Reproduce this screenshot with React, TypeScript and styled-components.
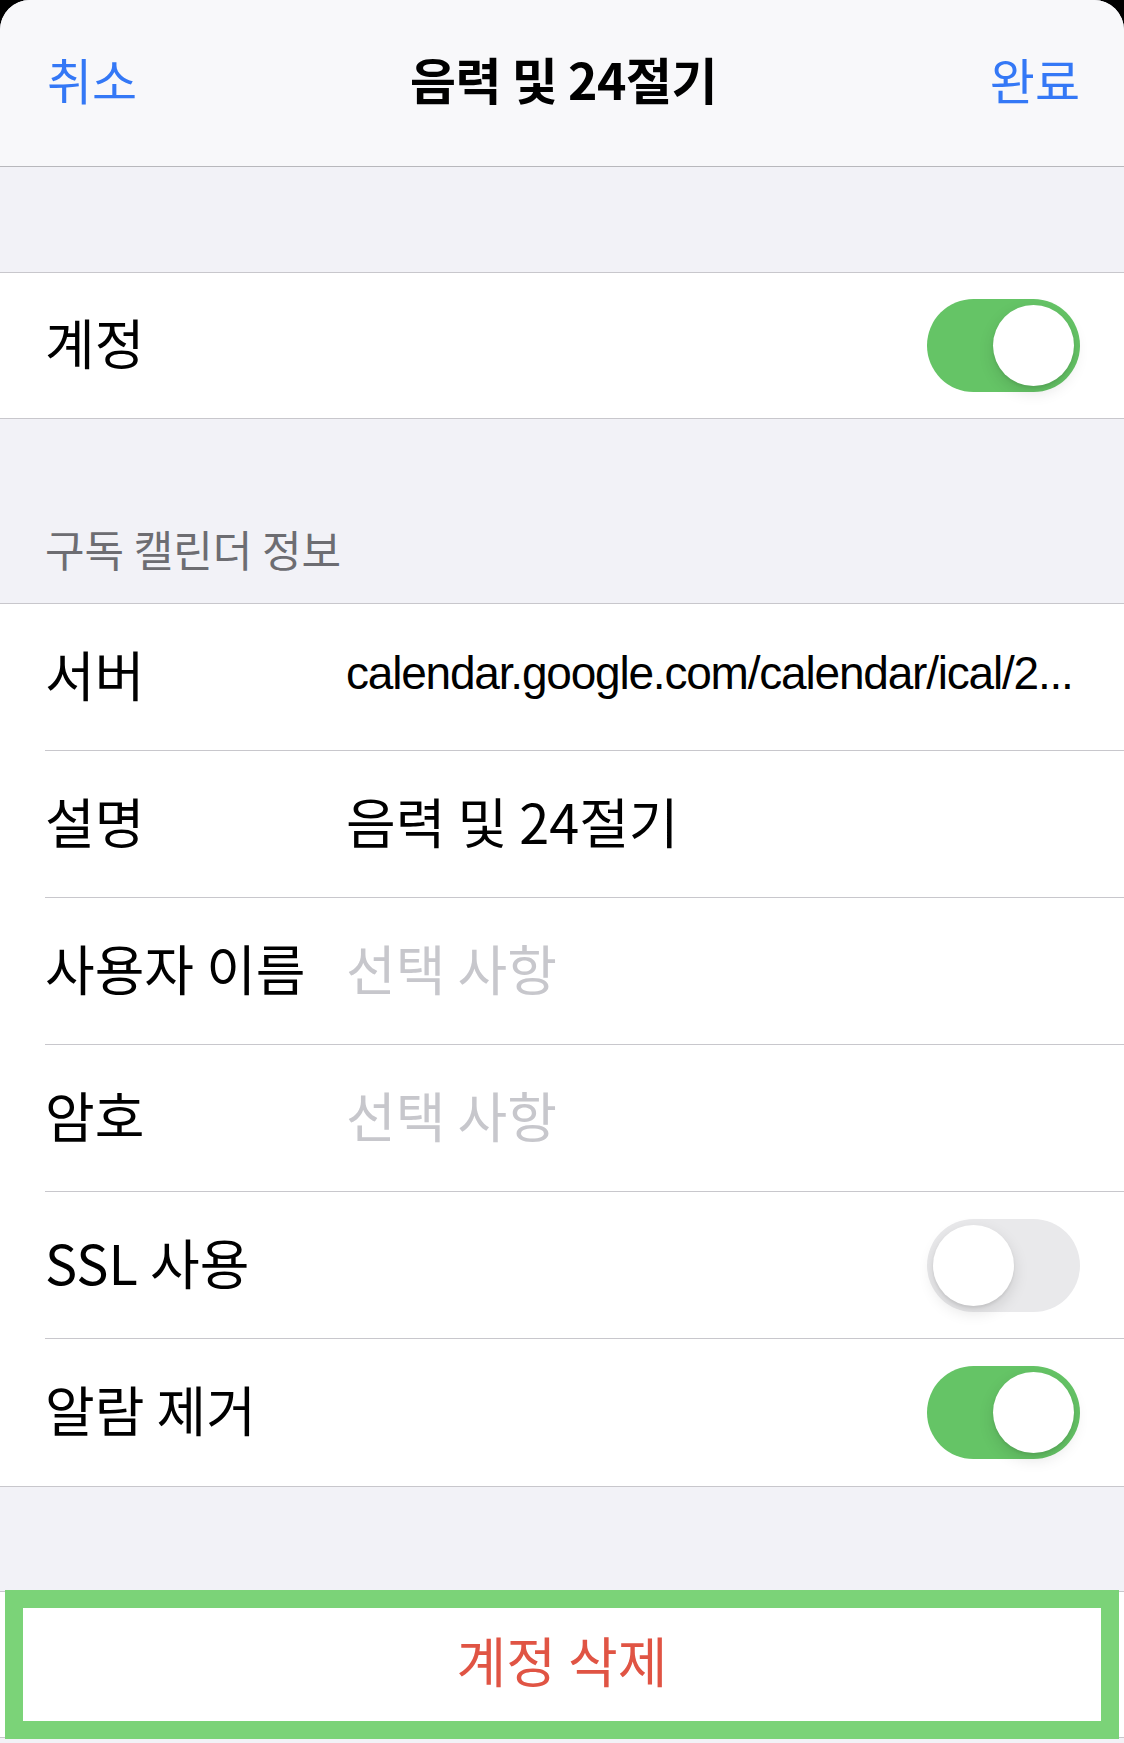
import React from 'react';
import styled, { createGlobalStyle } from 'styled-components';

const GlobalStyle = createGlobalStyle`
  html, body {
    margin: 0;
    padding: 0;
    background: #000;
  }
  * {
    box-sizing: border-box;
  }
`;

const FONT = `"Noto Sans CJK KR", "Noto Sans", sans-serif`;
const LATIN_FONT = `"Liberation Sans", "Noto Sans CJK KR", sans-serif`;

const Sheet = styled.div`
  width: 1124px;
  min-height: 1743px;
  background: #f2f2f7;
  border-radius: 30px 30px 0 0;
  overflow: hidden;
  font-family: ${FONT};
  color: #000;
`;

const NavBar = styled.header`
  height: 167px;
  padding: 0 44px 0 47px;
  background: #f8f8fa;
  border-bottom: 1px solid #b8b8bc;
  display: flex;
  align-items: center;
  justify-content: space-between;
`;

const NavButton = styled.span`
  font-size: 49px;
  color: #3478f6;
  padding-bottom: 10px;
`;

const NavTitle = styled.h1`
  margin: 0;
  font-size: 50px;
  font-weight: 700;
  padding-bottom: 10px;
  letter-spacing: -0.5px;
`;

const Spacer = styled.div<{ $h: number }>`
  height: ${(p) => p.$h}px;
`;

const SectionHeader = styled.div`
  height: 184px;
  display: flex;
  align-items: flex-end;
  padding: 0 0 24px 45px;
  font-size: 43px;
  color: #6d6d72;
`;

const Group = styled.section`
  background: #fff;
  border-top: 1px solid #c8c7cc;
  border-bottom: 1px solid #c8c7cc;
  position: relative;
`;

const Row = styled.div`
  padding-left: 45px;
  &:not(:last-child) > div {
    border-bottom: 1px solid #c8c7cc;
  }
`;

const RowInner = styled.div<{ $h: number }>`
  height: ${(p) => p.$h}px;
  display: flex;
  align-items: center;
  padding-right: 44px;
`;

const Label = styled.span`
  font-size: 54px;
  width: 301px;
  flex-shrink: 0;
  white-space: nowrap;
  padding-bottom: 8px;
`;

const Value = styled.span<{ $placeholder?: boolean; $latin?: boolean }>`
  flex: 1;
  min-width: 0;
  font-size: ${(p) => (p.$latin ? '46px' : '54px')};
  font-family: ${(p) => (p.$latin ? LATIN_FONT : FONT)};
  letter-spacing: ${(p) => (p.$latin ? '-1.2px' : '0')};
  color: ${(p) => (p.$placeholder ? '#c7c7cc' : '#000')};
  white-space: nowrap;
  overflow: hidden;
  text-overflow: ellipsis;
  padding-bottom: 8px;
`;

const Grow = styled.div`
  flex: 1;
`;

const Track = styled.div<{ $on: boolean }>`
  width: 153px;
  height: 93px;
  border-radius: 47px;
  background: ${(p) => (p.$on ? '#65c466' : '#e9e9eb')};
  padding: 6px;
  display: flex;
  justify-content: ${(p) => (p.$on ? 'flex-end' : 'flex-start')};
  flex-shrink: 0;
`;

const Knob = styled.div`
  width: 81px;
  height: 81px;
  border-radius: 50%;
  background: #fff;
  box-shadow: 0 6px 16px rgba(0, 0, 0, 0.12), 0 2px 3px rgba(0, 0, 0, 0.08);
`;

const DeleteRow = styled.div`
  height: 145px;
  display: flex;
  align-items: center;
  justify-content: center;
  font-size: 54px;
  color: #e05444;
  padding-bottom: 10px;
`;

const Highlight = styled.div`
  position: absolute;
  left: 5px;
  right: 5px;
  top: -2px;
  bottom: -2px;
  border: 18px solid #7bd378;
  pointer-events: none;
`;

const Toggle = ({ on }: { on: boolean }) => (
  <Track $on={on}>
    <Knob />
  </Track>
);

interface IField {
  label: string;
  value?: string;
  placeholder?: boolean;
  latin?: boolean;
  toggle?: boolean;
}

const fields: IField[] = [
  { label: '서버', value: 'calendar.google.com/calendar/ical/2...', latin: true },
  { label: '설명', value: '음력 및 24절기' },
  { label: '사용자 이름', value: '선택 사항', placeholder: true },
  { label: '암호', value: '선택 사항', placeholder: true },
  { label: 'SSL 사용', toggle: false },
  { label: '알람 제거', toggle: true },
];

export default function App() {
  return (
    <>
      <GlobalStyle />
      <Sheet>
        <NavBar>
          <NavButton>취소</NavButton>
          <NavTitle>음력 및 24절기</NavTitle>
          <NavButton>완료</NavButton>
        </NavBar>

        <Spacer $h={105} />

        <Group>
          <Row>
            <RowInner $h={145}>
              <Label>계정</Label>
              <Grow />
              <Toggle on />
            </RowInner>
          </Row>
        </Group>

        <SectionHeader>구독 캘린더 정보</SectionHeader>

        <Group>
          {fields.map((f) => (
            <Row key={f.label}>
              <RowInner $h={147}>
                <Label>{f.label}</Label>
                {f.toggle === undefined ? (
                  <Value $placeholder={f.placeholder} $latin={f.latin}>
                    {f.value}
                  </Value>
                ) : (
                  <>
                    <Grow />
                    <Toggle on={f.toggle} />
                  </>
                )}
              </RowInner>
            </Row>
          ))}
        </Group>

        <Spacer $h={104} />

        <Group>
          <DeleteRow>계정 삭제</DeleteRow>
          <Highlight />
        </Group>
      </Sheet>
    </>
  );
}
